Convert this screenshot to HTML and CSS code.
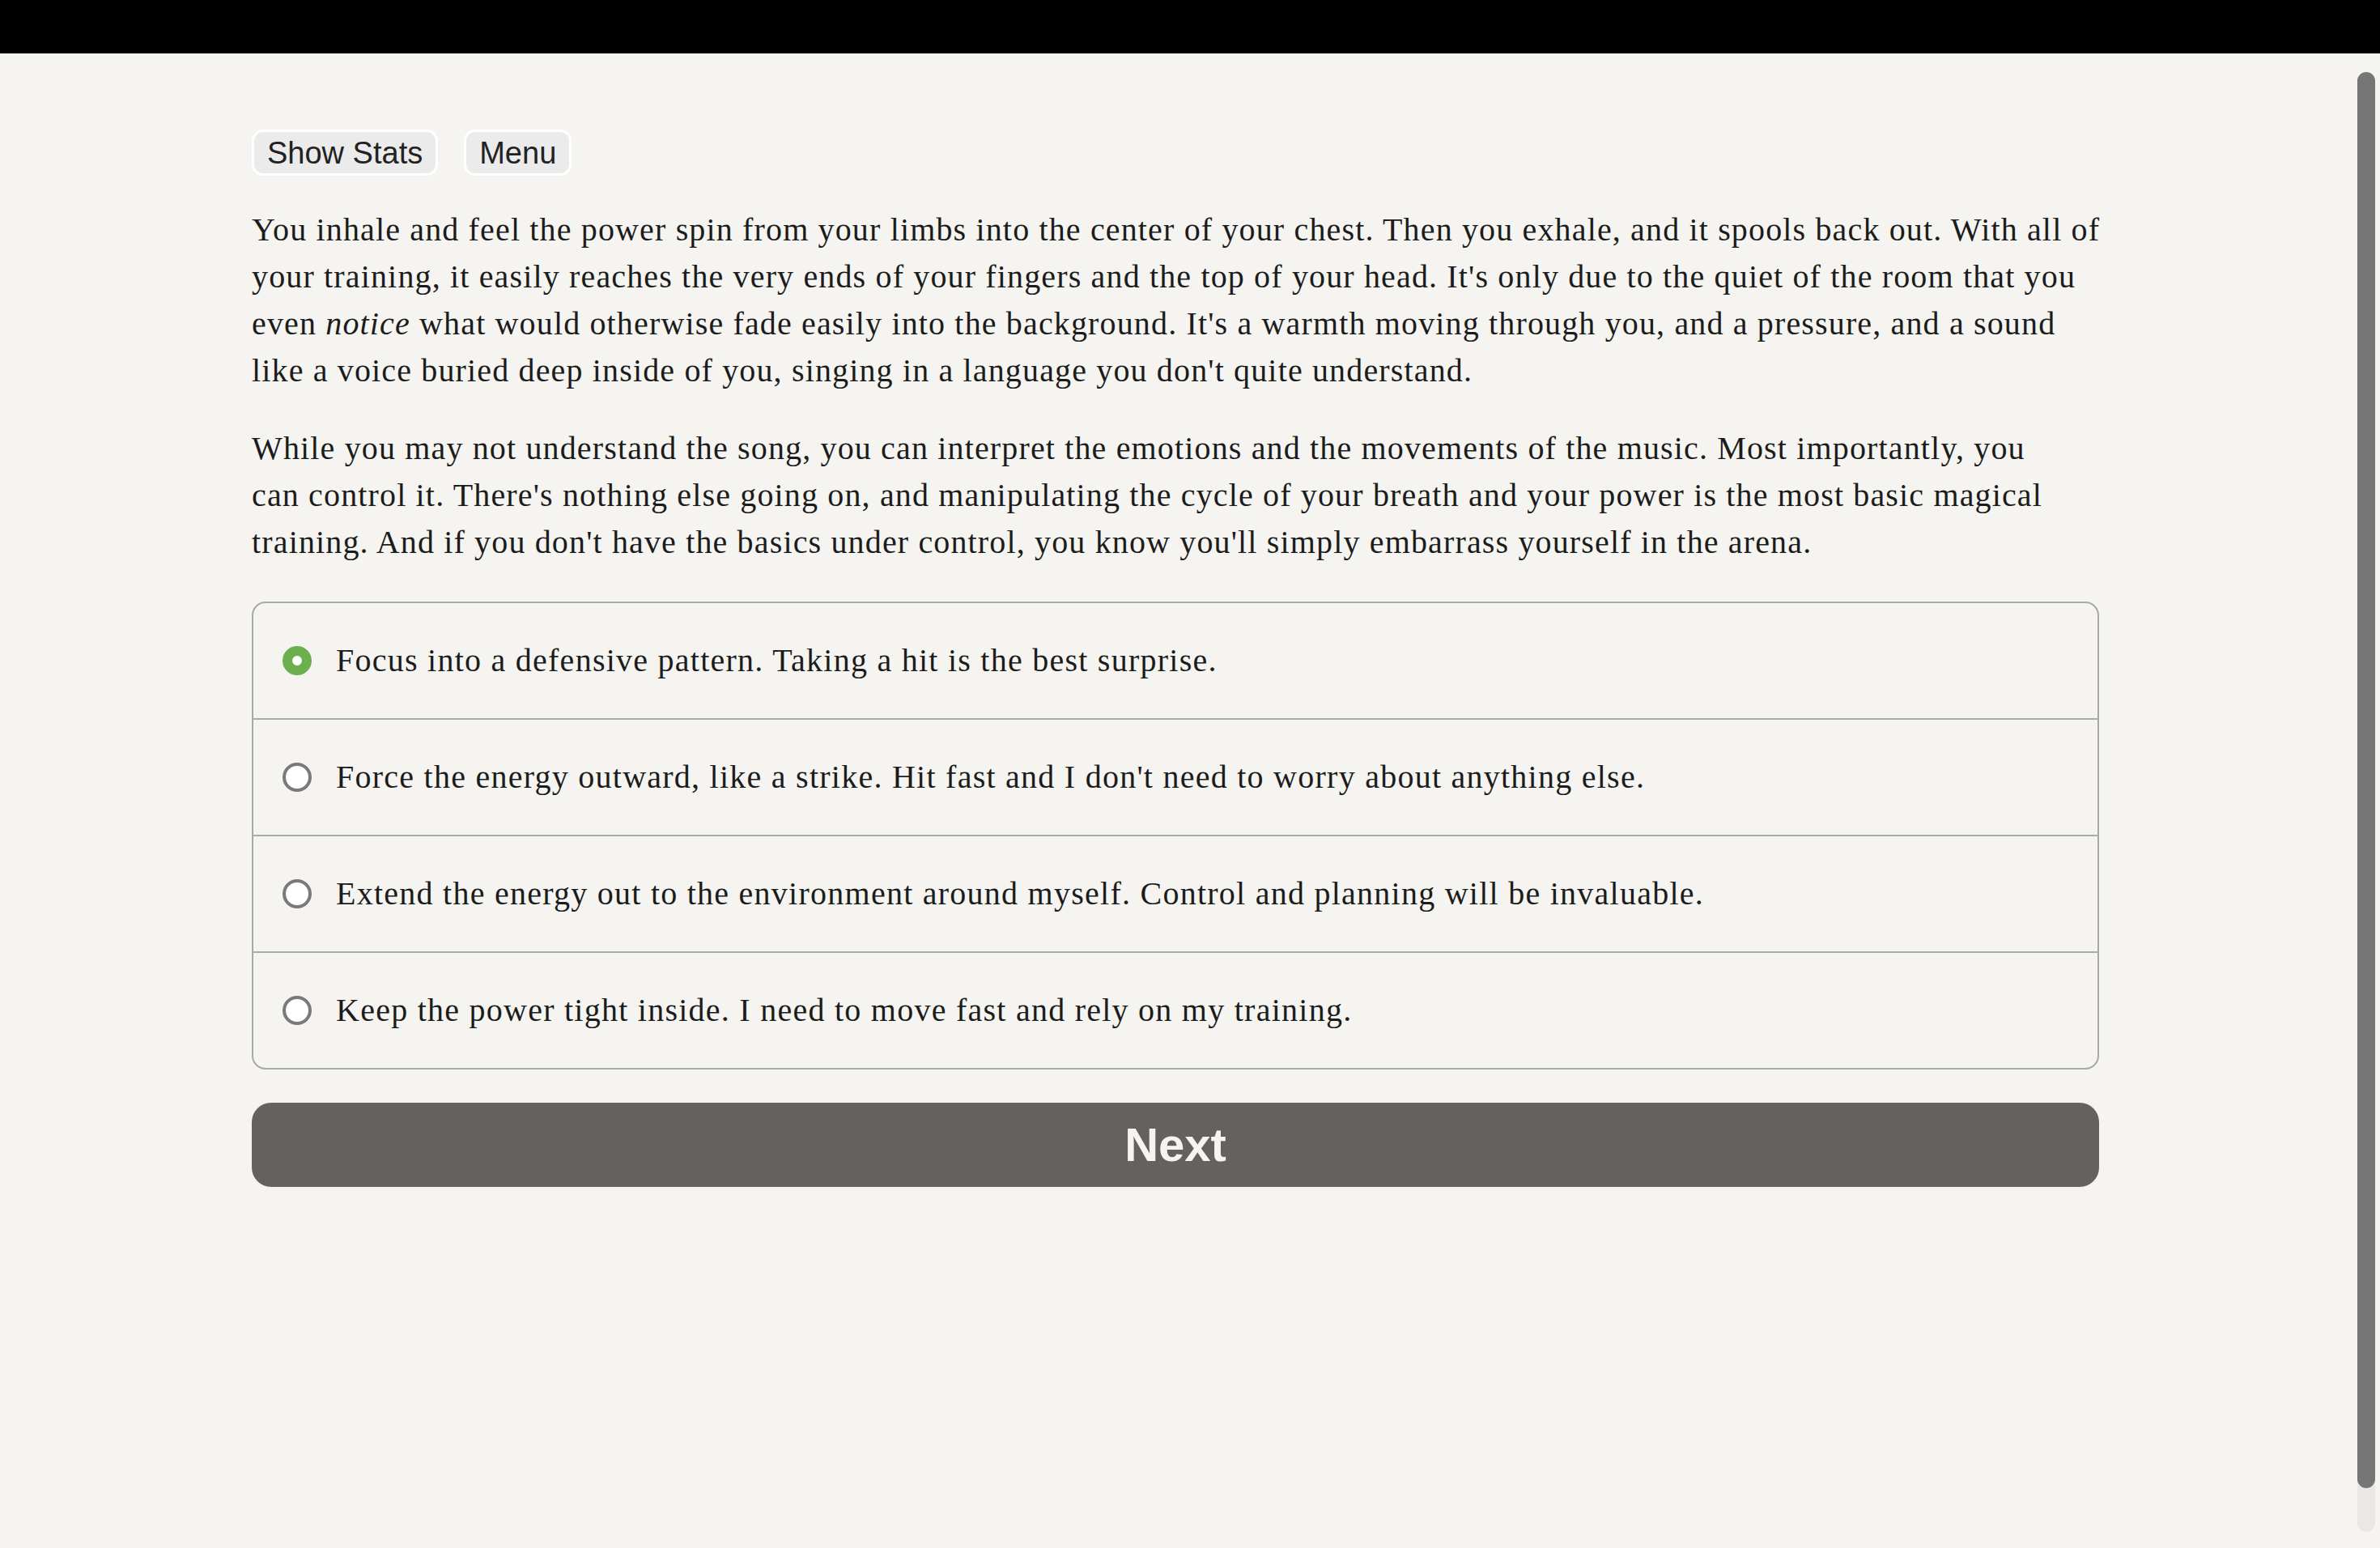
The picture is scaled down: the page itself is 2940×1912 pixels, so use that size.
FILE: index.html
```html
<!DOCTYPE html>
<html lang="en">
<head>
<meta charset="utf-8">
<title>Choice</title>
<link rel="stylesheet" href="styles.css">
</head>
<body>
<header class="topbar"></header>
<main class="viewport">
  <div class="content">
    <div class="page">
      <div class="toolbar">
        <button class="tool-btn" type="button">Show Stats</button>
        <button class="tool-btn" type="button">Menu</button>
      </div>
      <p class="story">You inhale and feel the power spin from your limbs into the center of your chest. Then you exhale, and it spools back out. With all of<br>your training, it easily reaches the very ends of your fingers and the top of your head. It's only due to the quiet of the room that you<br>even <i>notice</i> what would otherwise fade easily into the background. It's a warmth moving through you, and a pressure, and a sound<br>like a voice buried deep inside of you, singing in a language you don't quite understand.</p>
      <p class="story">While you may not understand the song, you can interpret the emotions and the movements of the music. Most importantly, you<br>can control it. There's nothing else going on, and manipulating the cycle of your breath and your power is the most basic magical<br>training. And if you don't have the basics under control, you know you'll simply embarrass yourself in the arena.</p>
      <div class="choices">
        <label class="choice"><span class="radio radio-on"></span><span class="choice-text">Focus into a defensive pattern. Taking a hit is the best surprise.</span></label>
        <label class="choice"><span class="radio"></span><span class="choice-text">Force the energy outward, like a strike. Hit fast and I don't need to worry about anything else.</span></label>
        <label class="choice"><span class="radio"></span><span class="choice-text">Extend the energy out to the environment around myself. Control and planning will be invaluable.</span></label>
        <label class="choice"><span class="radio"></span><span class="choice-text">Keep the power tight inside. I need to move fast and rely on my training.</span></label>
      </div>
      <button class="next-btn" type="button">Next</button>
    </div>
  </div>
  <div class="scrollbar" aria-hidden="true">
    <div class="scroll-track">
      <div class="scroll-thumb"></div>
    </div>
  </div>
</main>
</body>
</html>
```
FILE: styles.css
```css
html, body {
  margin: 0;
  padding: 0;
  height: 100%;
}
body {
  background: #f5f4f0;
  color: #1c1c1c;
  overflow: hidden;
  display: flex;
  flex-direction: column;
}
.topbar {
  flex: 0 0 66px;
  background: #000;
}
.viewport {
  flex: 1 1 auto;
  min-height: 0;
  display: flex;
  background: #f5f4f0;
  overflow: hidden;
}
.content {
  flex: 1 1 auto;
  min-width: 0;
}
.scrollbar {
  flex: 0 0 22px;
  padding: 23px 6px 20px 8px;
  display: flex;
}
.scroll-track {
  flex: 1;
  background: #e9e8e4;
  border-radius: 11px;
}
.scroll-thumb {
  height: 97%;
  background: #767676;
  border-radius: 11px;
}
.page {
  width: 2282px;
  margin: 0 auto;
  padding-top: 94px;
}
.toolbar {
  display: flex;
  gap: 32px;
}
.tool-btn {
  height: 57px;
  padding: 0 16px;
  border: 3px solid #ffffff;
  border-radius: 14px;
  background: #ebebeb;
  color: #222;
  font-family: "Liberation Sans", Arial, sans-serif;
  font-size: 38px;
  line-height: 1;
}
.story {
  margin: 38px 0 0;
  font-family: "Liberation Serif", "Times New Roman", serif;
  font-size: 40px;
  line-height: 58px;
  letter-spacing: 1.15px;
  white-space: nowrap;
}
.story i {
  font-style: italic;
}
.choices {
  margin-top: 44px;
  border: 2px solid #a9a9ac;
  border-radius: 17px;
  display: flex;
  flex-direction: column;
}
.choice {
  display: flex;
  align-items: center;
  gap: 30px;
  height: 142px;
  padding: 0 36px;
  font-family: "Liberation Serif", "Times New Roman", serif;
  font-size: 40px;
  line-height: 58px;
  letter-spacing: 1.25px;
}
.choice + .choice {
  border-top: 2px solid #a9a9ac;
}
.radio {
  flex: 0 0 36px;
  width: 36px;
  height: 36px;
  box-sizing: border-box;
  border-radius: 50%;
  border: 4px solid #7a7a7a;
  background: #ffffff;
}
.radio-on {
  border: 12px solid #6cb04e;
}
.next-btn {
  display: block;
  width: 100%;
  height: 104px;
  margin-top: 41px;
  border: 0;
  border-radius: 24px;
  background: #636260;
  color: #f5f4f0;
  font-family: "Liberation Sans", Arial, sans-serif;
  font-weight: bold;
  font-size: 58px;
  line-height: 1;
}
```
